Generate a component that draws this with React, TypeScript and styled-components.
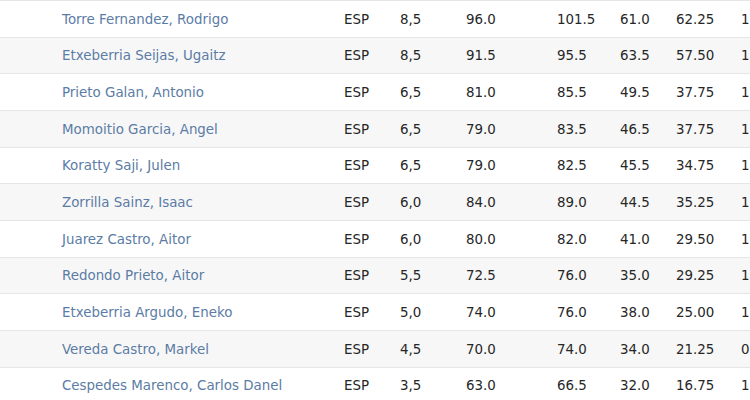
import React from 'react';
import styled, { createGlobalStyle } from 'styled-components';

const GlobalStyle = createGlobalStyle`
  html, body {
    margin: 0;
    padding: 0;
    background: #ffffff;
    overflow: hidden;
  }
  body {
    font-family: "DejaVu Sans", Verdana, sans-serif;
    font-size: 13.4px;
    color: #262626;
  }
`;

const Table = styled.div`
  width: 750px;
  border-top: 1px solid #e6e6e6;
`;

const Row = styled.div<{ $striped: boolean }>`
  display: grid;
  grid-template-columns: 62px 282px 56px 66px 91px 63px 56px 65px 60px;
  align-items: center;
  height: 36.67px;
  padding-top: 1px;
  box-sizing: border-box;
  border-bottom: 1px solid #e6e6e6;
  background: ${({ $striped }) => ($striped ? '#f7f7f7' : '#ffffff')};
  white-space: nowrap;
`;

const Cell = styled.div`
  overflow: visible;
`;

const Name = styled.a`
  color: #5b7ca5;
  text-decoration: none;
  cursor: pointer;
`;

type Player = {
  name: string;
  fed: string;
  pts: string;
  b1: string;
  b2: string;
  sb: string;
  ar: string;
  last: string;
};

const players: Player[] = [
  { name: 'Torre Fernandez, Rodrigo', fed: 'ESP', pts: '8,5', b1: '96.0', b2: '101.5', sb: '61.0', ar: '62.25', last: '1' },
  { name: 'Etxeberria Seijas, Ugaitz', fed: 'ESP', pts: '8,5', b1: '91.5', b2: '95.5', sb: '63.5', ar: '57.50', last: '1' },
  { name: 'Prieto Galan, Antonio', fed: 'ESP', pts: '6,5', b1: '81.0', b2: '85.5', sb: '49.5', ar: '37.75', last: '1' },
  { name: 'Momoitio Garcia, Angel', fed: 'ESP', pts: '6,5', b1: '79.0', b2: '83.5', sb: '46.5', ar: '37.75', last: '1' },
  { name: 'Koratty Saji, Julen', fed: 'ESP', pts: '6,5', b1: '79.0', b2: '82.5', sb: '45.5', ar: '34.75', last: '1' },
  { name: 'Zorrilla Sainz, Isaac', fed: 'ESP', pts: '6,0', b1: '84.0', b2: '89.0', sb: '44.5', ar: '35.25', last: '1' },
  { name: 'Juarez Castro, Aitor', fed: 'ESP', pts: '6,0', b1: '80.0', b2: '82.0', sb: '41.0', ar: '29.50', last: '1' },
  { name: 'Redondo Prieto, Aitor', fed: 'ESP', pts: '5,5', b1: '72.5', b2: '76.0', sb: '35.0', ar: '29.25', last: '1' },
  { name: 'Etxeberria Argudo, Eneko', fed: 'ESP', pts: '5,0', b1: '74.0', b2: '76.0', sb: '38.0', ar: '25.00', last: '1' },
  { name: 'Vereda Castro, Markel', fed: 'ESP', pts: '4,5', b1: '70.0', b2: '74.0', sb: '34.0', ar: '21.25', last: '0' },
  { name: 'Cespedes Marenco, Carlos Danel', fed: 'ESP', pts: '3,5', b1: '63.0', b2: '66.5', sb: '32.0', ar: '16.75', last: '1' },
];

const App: React.FC = () => {
  return (
    <>
      <GlobalStyle />
      <Table>
        {players.map((p, i) => (
          <Row key={p.name} $striped={i % 2 === 1}>
            <Cell />
            <Cell>
              <Name>{p.name}</Name>
            </Cell>
            <Cell>{p.fed}</Cell>
            <Cell>{p.pts}</Cell>
            <Cell>{p.b1}</Cell>
            <Cell>{p.b2}</Cell>
            <Cell>{p.sb}</Cell>
            <Cell>{p.ar}</Cell>
            <Cell>{p.last}</Cell>
          </Row>
        ))}
      </Table>
    </>
  );
};

export default App;
